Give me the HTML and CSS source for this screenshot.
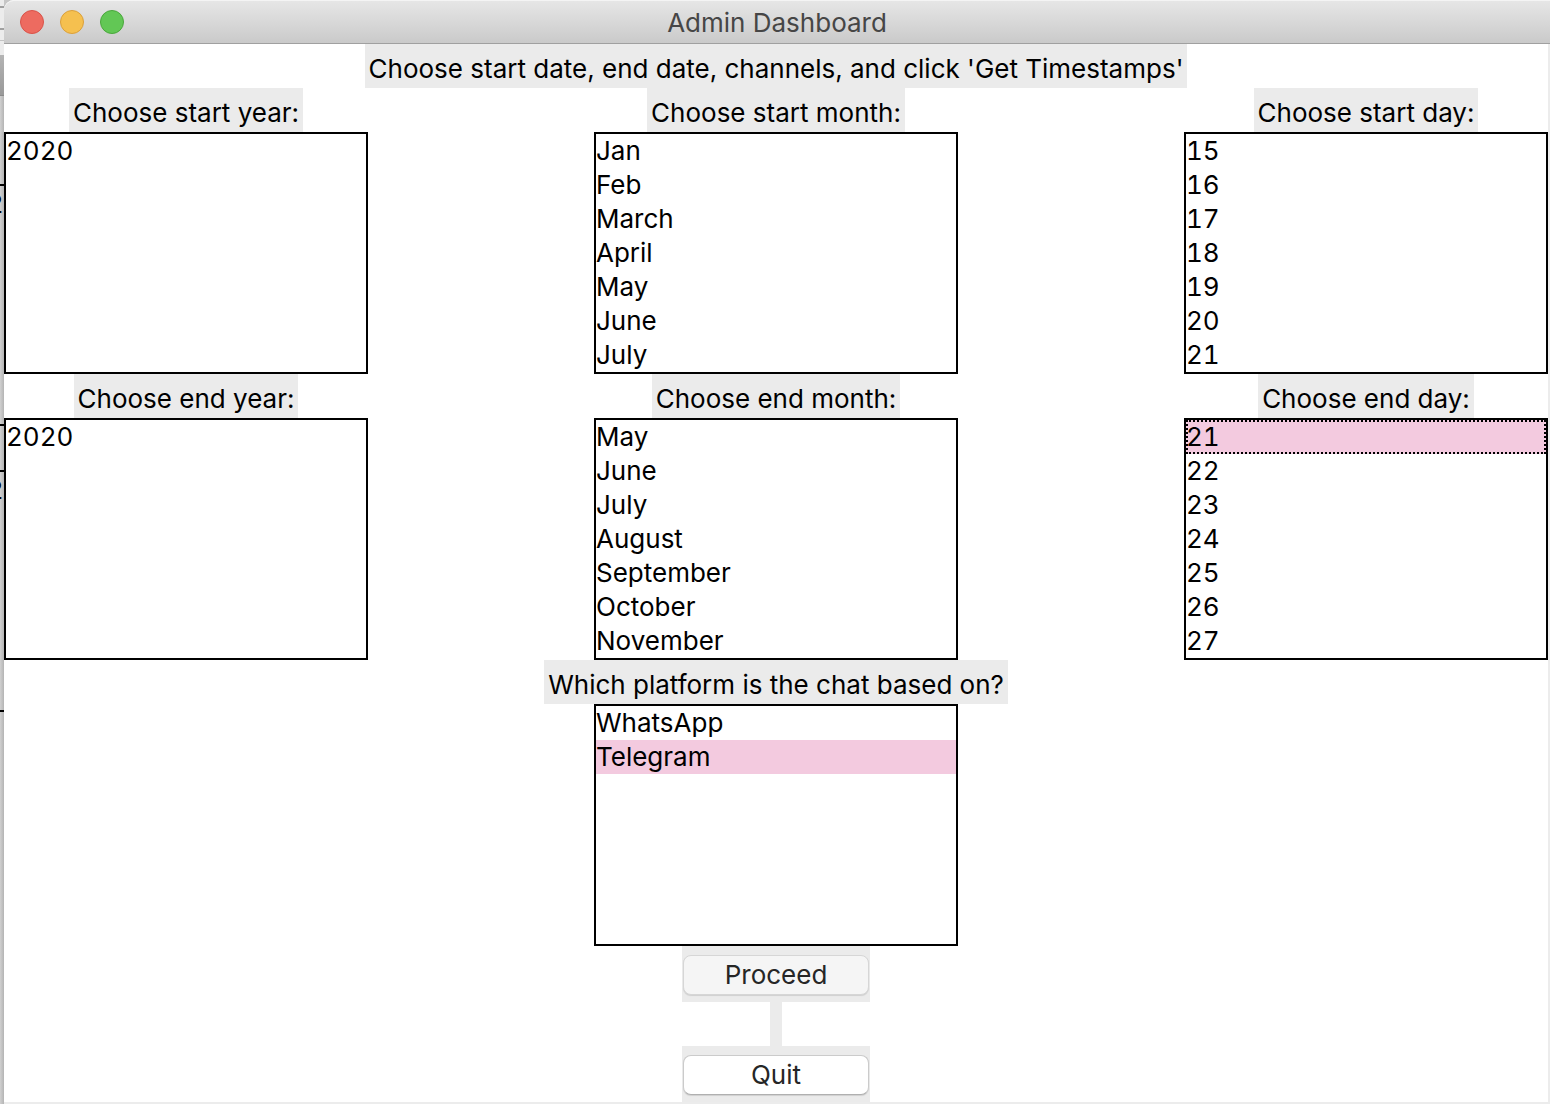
FILE: index.html
```
<!DOCTYPE html>
<html lang="en">
<head>
<meta charset="utf-8">
<title>Admin Dashboard</title>
<link rel="stylesheet" href="styles.css">
</head>
<body>
<div class="behind" aria-hidden="true">
  <div class="behind-toolbar"></div>
  <div class="behind-bar"></div>
  <div class="behind-body">
    <div class="behind-gap"></div>
    <div class="behind-list">2</div>
    <div class="behind-label"></div>
    <div class="behind-list">2</div>
  </div>
</div>
<main class="window">
  <header class="titlebar">
    <div class="lights">
      <button class="light close" type="button" aria-label="Close"></button>
      <button class="light minimize" type="button" aria-label="Minimize"></button>
      <button class="light zoom" type="button" aria-label="Zoom"></button>
    </div>
    <h1 class="title">Admin Dashboard</h1>
  </header>
  <form class="form">
    <p class="label intro">Choose start date, end date, channels, and click 'Get Timestamps'</p>
    <div class="field">
      <label class="label" for="start-year">Choose start year:</label>
      <select class="list" id="start-year" size="7">
        <option>2020</option>
      </select>
    </div>
    <div class="field">
      <label class="label" for="start-month">Choose start month:</label>
      <select class="list" id="start-month" size="7">
        <option>Jan</option>
        <option>Feb</option>
        <option>March</option>
        <option>April</option>
        <option>May</option>
        <option>June</option>
        <option>July</option>
      </select>
    </div>
    <div class="field">
      <label class="label" for="start-day">Choose start day:</label>
      <select class="list" id="start-day" size="7">
        <option>15</option>
        <option>16</option>
        <option>17</option>
        <option>18</option>
        <option>19</option>
        <option>20</option>
        <option>21</option>
      </select>
    </div>
    <div class="field">
      <label class="label" for="end-year">Choose end year:</label>
      <select class="list" id="end-year" size="7">
        <option>2020</option>
      </select>
    </div>
    <div class="field">
      <label class="label" for="end-month">Choose end month:</label>
      <select class="list" id="end-month" size="7">
        <option>May</option>
        <option>June</option>
        <option>July</option>
        <option>August</option>
        <option>September</option>
        <option>October</option>
        <option>November</option>
      </select>
    </div>
    <div class="field">
      <label class="label" for="end-day">Choose end day:</label>
      <select class="list" id="end-day" size="7">
        <option class="active" selected>21</option>
        <option>22</option>
        <option>23</option>
        <option>24</option>
        <option>25</option>
        <option>26</option>
        <option>27</option>
      </select>
    </div>
    <div class="field platform">
      <label class="label" for="platform">Which platform is the chat based on?</label>
      <select class="list" id="platform" size="7">
        <option>WhatsApp</option>
        <option selected>Telegram</option>
      </select>
    </div>
    <div class="actions">
      <div class="button-cell"><button class="button muted" type="button">Proceed</button></div>
      <div class="spacer"></div>
      <div class="button-cell"><button class="button" type="button">Quit</button></div>
    </div>
  </form>
</main>
</body>
</html>
```
FILE: styles.css
```
* {
  box-sizing: border-box;
}

body {
  margin: 0;
  min-height: 100vh;
  display: flex;
  background: #c6c6c6;
  color: #000;
  font: 26px/34px Inter, "Liberation Sans", sans-serif;
}

/* Sliver of the window that sits behind this one */
.behind {
  flex: none;
  display: flex;
  flex-direction: column;
  width: 4px;
  overflow: hidden;
}

.behind-toolbar {
  height: 55px;
  background: linear-gradient(#a0a0a0, #a0a0a0) 0 6px / 100% 2px no-repeat,
    linear-gradient(#a0a0a0, #a0a0a0) 0 28px / 100% 2px no-repeat,
    linear-gradient(#c4c4c4, #c4c4c4) 0 40px / 100% 1px no-repeat,
    #ececec;
}

.behind-bar {
  height: 41px;
  border-bottom: 1px solid #8a8a8a;
  background: linear-gradient(#b4b4b4, #999);
}

.behind-body {
  flex: 1;
  background: linear-gradient(90deg, #d0d0d0, #b4b4b4);
}

.behind-gap {
  height: 88px;
}

.behind-list {
  display: flex;
  justify-content: flex-end;
  height: 242px;
  padding: 1px 1px 0 0;
  border: solid #000;
  border-width: 2px 0;
}

.behind-label {
  height: 44px;
}

.window {
  flex: 1;
  min-width: 0;
  display: flex;
  flex-direction: column;
  border-radius: 10px 0 0 0;
  background: #fff;
}

.titlebar {
  display: grid;
  grid-template-columns: 1fr auto 1fr;
  align-items: center;
  height: 44px;
  padding: 0 16px;
  border-top: 1px solid #f4f4f4;
  border-bottom: 1px solid #a0a0a0;
  border-radius: 10px 0 0 0;
  background: linear-gradient(#e6e6e6, #cacaca);
}

.lights {
  display: flex;
  gap: 16px;
}

.light {
  width: 24px;
  height: 24px;
  padding: 0;
  border: 1px solid;
  border-radius: 50%;
}

.close {
  border-color: #d95349;
  background: #ed6b60;
}

.minimize {
  border-color: #dba03b;
  background: #f5c04f;
}

.zoom {
  border-color: #4aa73c;
  background: #62c755;
}

.title {
  margin: 0;
  padding-top: 2px;
  color: #464646;
  font-size: inherit;
  font-weight: 400;
}

.form {
  flex: 1;
  display: grid;
  grid-template-columns: 364px 1fr 364px;
  align-content: start;
  justify-items: center;
  border: solid #ececec;
  border-width: 0 2px 2px 0;
}

.label {
  height: 44px;
  margin: 0;
  padding: 0 4px;
  background: #ebebeb;
  line-height: 50px;
  white-space: nowrap;
}

.intro {
  grid-column: 1 / -1;
}

.field {
  display: flex;
  flex-direction: column;
  align-items: center;
}

.platform,
.actions {
  grid-column: 2;
}

.list {
  width: 364px;
  height: 242px;
  margin: 0;
  padding: 0;
  border: 2px solid #000;
  border-radius: 0;
  outline: 0;
  overflow: hidden;
  background: #fff;
  color: #000;
  font: inherit;
  font-variant-numeric: tabular-nums;
  scrollbar-width: none;
}

.list option {
  height: 34px;
  padding: 1px 0 0;
  color: #000;
}

.list option:checked {
  background: #f3cadf linear-gradient(#f3cadf, #f3cadf);
  color: #000;
  -webkit-text-fill-color: #000;
}

.list .active {
  outline: 2px dotted #000;
  outline-offset: -2px;
}

.actions {
  display: flex;
  flex-direction: column;
  align-items: center;
}

.button-cell {
  height: 56px;
  padding: 9px 1px 7px;
  background: #ebebeb;
}

.button {
  display: block;
  width: 186px;
  height: 40px;
  padding: 0;
  border: 1px solid #cbcbcb;
  border-bottom-color: #b0b0b0;
  border-radius: 8px;
  background: #fff;
  box-shadow: 0 1px 1px #d0d0d0;
  color: #262626;
  font: inherit;
}

.muted {
  border-color: #d6d6d6;
  background: #f5f5f5;
}

.spacer {
  width: 12px;
  height: 44px;
  background: #ebebeb;
}
```
